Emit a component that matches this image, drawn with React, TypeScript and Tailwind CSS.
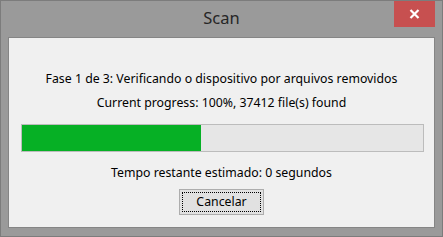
import React from "react";

export default function App() {
  const font = { fontFamily: '"Noto Sans", "Open Sans", sans-serif' };
  return (
    <div className="w-[443px] h-[237px] bg-[#9a9a9a] border border-[#7c7c7c] flex flex-col" style={font}>
      <div className="relative h-[36px] flex items-center justify-center shrink-0">
        <span className="text-[16.5px] text-[#262626] leading-none -mt-[2px]">Scan</span>
        <div className="absolute right-[7px] top-0 w-[41px] h-[26px] bg-[#c75050] flex items-center justify-center">
          <svg width="11" height="10" viewBox="0 0 11 10">
            <path d="M1.5 1 L9.5 9 M9.5 1 L1.5 9" stroke="#ffffff" strokeWidth="2.2" />
          </svg>
        </div>
      </div>
      <div className="ml-[7px] mr-[7px] mb-[8px] flex-1 bg-[#f0f0f0] border border-[#858585] flex flex-col items-center pt-[33px] text-[12.3px] text-[#000] leading-[16px]">
        <div>Fase 1 de 3: Verificando o dispositivo por arquivos removidos</div>
        <div className="mt-[8px]">Current progress: 100%, 37412 file(s) found</div>
        <div className="mt-[13px] self-start ml-[12px] w-[403px] h-[28px] border border-[#bcbcbc] bg-[#e6e6e6] flex">
          <div className="w-[179px] h-full bg-[#06b025]" />
        </div>
        <div className="mt-[13px]">Tempo restante estimado: 0 segundos</div>
        <div className="mt-[8px] w-[85px] h-[26px] border border-[#adadad] bg-[#e1e1e1] p-[2px]">
          <div className="w-full h-full border border-dotted border-[#000] flex items-center justify-center">
            Cancelar
          </div>
        </div>
      </div>
    </div>
  );
}
